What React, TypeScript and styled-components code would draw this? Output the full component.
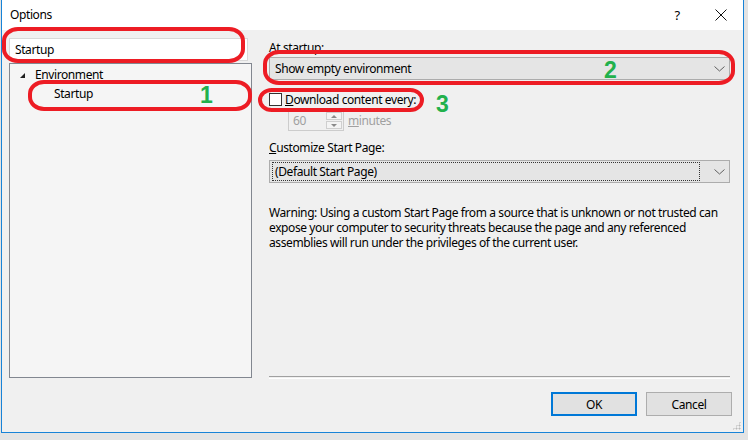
import styled, { createGlobalStyle } from "styled-components"

const GlobalStyle = createGlobalStyle`
    html, body {
        margin: 0;
        padding: 0;
        background: #e3e3e3;
    }
    body {
        width: 748px;
        height: 440px;
        overflow: hidden;
        font-family: "Noto Sans", "Segoe UI", sans-serif;
        font-size: 12px;
        letter-spacing: -0.4px;
        color: #000;
    }
`

const Dialog = styled.div`
    position: relative;
    margin-left: 1px;
    width: 741px;
    height: 432px;
    border: 1px solid #1883d7;
    border-top: none;
    background: #f0f0f0;
    display: flex;
    flex-direction: column;
    box-sizing: content-box;
`

const TitleBar = styled.div`
    height: 30px;
    background: #fff;
    display: flex;
    align-items: center;
    padding-left: 8px;
    flex-shrink: 0;
`
const Title = styled.div`
    flex: 1;
    margin-top: -1px;
`
const TitleButton = styled.div`
    width: 44px;
    height: 30px;
    display: flex;
    align-items: center;
    justify-content: center;
    font-size: 13px;
`

const Body = styled.div`
    display: flex;
    padding: 8px 13px 0 7px;
    gap: 17px;
    height: 340px;
`

const LeftColumn = styled.div`
    width: 243px;
    flex-shrink: 0;
    display: flex;
    flex-direction: column;
    gap: 2px;
`
const SearchBox = styled.div`
    background: #fff;
    border: 1px solid #d9d9d9;
    display: flex;
    align-items: center;
    padding-left: 5px;
    box-sizing: border-box;
    width: 239px;
    height: 23px;
    position: relative;
`
const SearchHandle = styled.span`
    position: absolute;
    right: 3px;
    top: 5px;
    width: 3px;
    height: 10px;
    background-image: radial-gradient(circle, #9ab 0.8px, transparent 1px);
    background-size: 3px 3px;
`
const Tree = styled.div`
    flex: 1;
    background: #f5f5f5;
    border: 1px solid #828790;
    padding-top: 1px;
`
const TreeRow = styled.div<{ $indent: number }>`
    height: 19px;
    display: flex;
    align-items: center;
    padding-left: ${p => p.$indent}px;
`
const Expander = styled.span`
    width: 0;
    height: 0;
    border-left: 5px solid transparent;
    border-bottom: 5px solid #1e1e1e;
    margin-right: 10px;
    margin-top: 2px;
`

const RightColumn = styled.div`
    flex: 1;
    min-width: 0;
    display: flex;
    flex-direction: column;
`
const Label = styled.div<{ $top?: number }>`
    line-height: 16px;
    margin-top: ${p => p.$top ?? 0}px;
`
const Combo = styled.div<{ $top?: number }>`
    margin-top: ${p => p.$top ?? 0}px;
    height: 23px;
    background: #e5e5e5;
    border: 1px solid #acacac;
    box-sizing: border-box;
    display: flex;
    align-items: center;
    padding: 0 4px 0 2px;
`
const ComboText = styled.div<{ $focus?: boolean }>`
    flex: 1;
    height: 19px;
    line-height: 18px;
    padding-left: 2px;
    box-sizing: border-box;
    border: 1px ${p => (p.$focus ? "dotted #333" : "solid transparent")};
    margin-right: 14px;
`
const Chevron = () => (
    <svg width="11" height="6" viewBox="0 0 11 6">
        <path d="M0.5 0.5 L5.5 5 L10.5 0.5" fill="none" stroke="#606060" strokeWidth="1" />
    </svg>
)

const CheckRow = styled.div`
    margin-top: 11px;
    display: flex;
    align-items: center;
    height: 16px;
`
const CheckBox = styled.span`
    width: 13px;
    height: 13px;
    border: 1px solid #333;
    background: #fff;
    box-sizing: border-box;
    margin-right: 3px;
`
const SpinRow = styled.div`
    margin-top: 3px;
    margin-left: 19px;
    display: flex;
    align-items: center;
    gap: 4px;
    color: #a0a0a0;
`
const Spin = styled.div`
    width: 56px;
    height: 21px;
    border: 1px solid #cccccc;
    background: #f0f0f0;
    box-sizing: border-box;
    display: flex;
`
const SpinValue = styled.div`
    flex: 1;
    padding-left: 4px;
    line-height: 19px;
`
const SpinButtons = styled.div`
    width: 16px;
    display: flex;
    flex-direction: column;
    gap: 1px;
    margin: 1px 1px 1px 0;
`
const SpinButton = styled.div<{ $up?: boolean }>`
    flex: 1;
    border: 1px solid #cfcfcf;
    background: #f4f4f4;
    display: flex;
    align-items: center;
    justify-content: center;
    &::after {
        content: "";
        border-left: 3px solid transparent;
        border-right: 3px solid transparent;
        ${p => (p.$up ? "border-bottom: 3px solid #8a8a8a;" : "border-top: 3px solid #8a8a8a;")}
    }
`
const Warning = styled.div`
    margin-top: 22px;
    line-height: 15px;
`
const Separator = styled.div`
    margin-top: auto;
    height: 1px;
    border-top: 1px solid #a0a0a0;
    border-bottom: 1px solid #fff;
    margin-bottom: -1px;
`

const Footer = styled.div`
    display: flex;
    justify-content: flex-end;
    gap: 9px;
    padding: 14px 11px 0 0;
`
const Button = styled.div<{ $primary?: boolean }>`
    width: 86px;
    height: 24px;
    box-sizing: border-box;
    background: #e1e1e1;
    border: ${p => (p.$primary ? "2px solid #0078d7" : "1px solid #adadad")};
    display: flex;
    align-items: center;
    justify-content: center;
`
const Grip = styled.span`
    position: absolute;
    right: 2px;
    bottom: 2px;
    width: 9px;
    height: 9px;
    background-image: radial-gradient(circle, #b8b8b8 0.9px, transparent 1.1px);
    background-size: 3px 3px;
    clip-path: polygon(100% 0, 100% 100%, 0 100%);
`

const Mark = styled.div<{ $x: number; $y: number; $w: number; $h: number }>`
    position: absolute;
    left: ${p => p.$x}px;
    top: ${p => p.$y}px;
    width: ${p => p.$w}px;
    height: ${p => p.$h}px;
    border: 4px solid #ed1c24;
    border-radius: 16px / 14px;
    box-sizing: border-box;
    pointer-events: none;
`
const Number = styled.div<{ $x: number; $y: number }>`
    position: absolute;
    left: ${p => p.$x}px;
    top: ${p => p.$y}px;
    color: #22b14c;
    font-family: "Liberation Sans", Arial, sans-serif;
    font-weight: bold;
    font-size: 23px;
    line-height: 22px;
    letter-spacing: 0;
`

const U = styled.span`
    text-decoration: underline;
`

export default function App() {
    return (
        <>
            <GlobalStyle />
            <Dialog>
                <TitleBar>
                    <Title>Options</Title>
                    <TitleButton>?</TitleButton>
                    <TitleButton>
                        <svg width="12" height="12" viewBox="0 0 12 12">
                            <path d="M0.5 0.5 L11.5 11.5 M11.5 0.5 L0.5 11.5" stroke="#111" strokeWidth="1" />
                        </svg>
                    </TitleButton>
                </TitleBar>
                <Body>
                    <LeftColumn>
                        <SearchBox>
                            Startup
                            <SearchHandle />
                        </SearchBox>
                        <Tree>
                            <TreeRow $indent={10}>
                                <Expander />
                                Environment
                            </TreeRow>
                            <TreeRow $indent={44}>Startup</TreeRow>
                        </Tree>
                    </LeftColumn>
                    <RightColumn>
                        <Label $top={2}>At startup:</Label>
                        <Combo $top={1}>
                            <ComboText>Show empty environment</ComboText>
                            <Chevron />
                        </Combo>
                        <CheckRow>
                            <CheckBox />
                            <span>
                                <U>D</U>ownload content every:
                            </span>
                        </CheckRow>
                        <SpinRow>
                            <Spin>
                                <SpinValue>60</SpinValue>
                                <SpinButtons>
                                    <SpinButton $up />
                                    <SpinButton />
                                </SpinButtons>
                            </Spin>
                            <span>
                                <U>m</U>inutes
                            </span>
                        </SpinRow>
                        <Label $top={9}>
                            <U>C</U>ustomize Start Page:
                        </Label>
                        <Combo $top={4}>
                            <ComboText $focus>(Default Start Page)</ComboText>
                            <Chevron />
                        </Combo>
                        <Warning>
                            Warning: Using a custom Start Page from a source that is unknown or not trusted can
                            expose your computer to security threats because the page and any referenced
                            assemblies will run under the privileges of the current user.
                        </Warning>
                        <Separator />
                    </RightColumn>
                </Body>
                <Footer>
                    <Button $primary>OK</Button>
                    <Button>Cancel</Button>
                </Footer>
                <Grip />

                <Mark $x={0} $y={27} $w={243} $h={36} />
                <Mark $x={26} $y={80} $w={224} $h={31} />
                <Number $x={198} $y={84}>1</Number>
                <Mark $x={261} $y={50} $w={472} $h={35} />
                <Number $x={602} $y={59}>2</Number>
                <Mark $x={256} $y={88} $w={166} $h={24} />
                <Number $x={434} $y={93}>3</Number>
            </Dialog>
        </>
    )
}
